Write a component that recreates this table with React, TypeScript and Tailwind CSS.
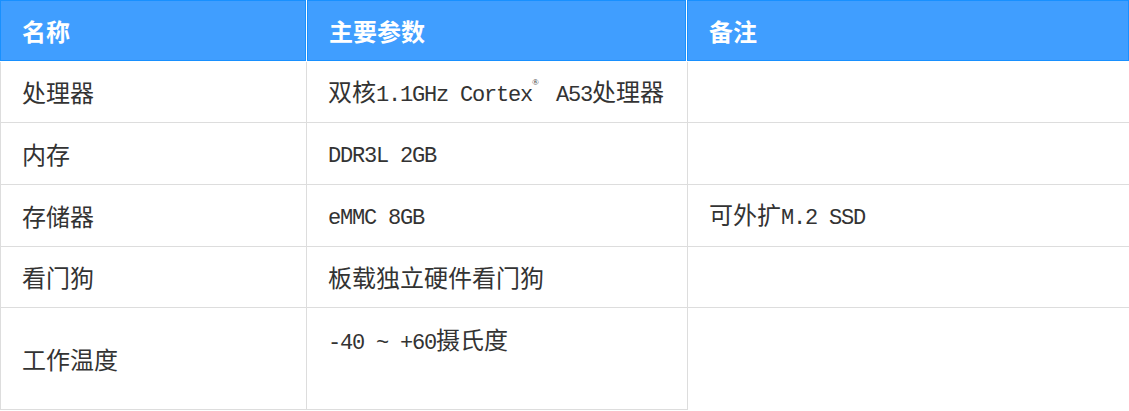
import React from "react";

// Latin runs are half-width (12px) like the CJK font's ASCII glyphs
const L = ({ children }: { children: React.ReactNode }) => (
  <span className="font-['Liberation_Mono',monospace] text-[22px] tracking-[-1.2px]">
    {children}
  </span>
);

const Reg = () => (
  <span className="inline-block w-[12px] align-top text-[9px] leading-[18px] font-['Liberation_Serif',serif]">
    ®
  </span>
);

interface SpecRow {
  name: string;
  spec: React.ReactNode;
  note: React.ReactNode;
  h: string;
}

const rows: SpecRow[] = [
  {
    name: "处理器",
    spec: (
      <>
        双核<L>1.1GHz Cortex</L>
        <Reg />
        <L> A53</L>处理器
      </>
    ),
    note: "",
    h: "h-[61px]",
  },
  { name: "内存", spec: <L>DDR3L 2GB</L>, note: "", h: "h-[62px]" },
  {
    name: "存储器",
    spec: <L>eMMC 8GB</L>,
    note: (
      <>
        可外扩<L>M.2 SSD</L>
      </>
    ),
    h: "h-[62px]",
  },
  { name: "看门狗", spec: "板载独立硬件看门狗", note: "", h: "h-[61px]" },
];

const headers = ["名称", "主要参数", "备注"];

export default function App() {
  return (
    <div className="w-[1129px] h-[411px] overflow-hidden bg-white font-['Noto_Sans_CJK_SC',sans-serif] text-[24px] text-[#333]">
      {/* header */}
      <div className="flex gap-px h-[61px]">
        {headers.map((h, i) => (
          <div
            key={h}
            className={`${
              i === 0 ? "w-[306px]" : i === 1 ? "w-[379px]" : "w-[442px]"
            } flex items-center pl-[21px] border border-[#1890ff] bg-[#409eff] text-white font-bold`}
          >
            {h}
          </div>
        ))}
      </div>

      {/* body */}
      <div className="mt-px">
        {rows.map((r) => (
          <div key={r.name} className={`grid grid-cols-[307px_381px_1fr] ${r.h}`}>
            <div className="flex items-center pl-[21px] border-l border-r border-b border-[#dddddd]">
              {r.name}
            </div>
            <div className="flex items-center pl-[21px] border-r border-b border-[#dddddd] whitespace-pre">
              <span>{r.spec}</span>
            </div>
            <div className="flex items-center pl-[21px] border-b border-[#dddddd] whitespace-pre">
              <span>{r.note}</span>
            </div>
          </div>
        ))}
        <div className="grid grid-cols-[307px_381px_1fr] h-[102px]">
          <div className="flex items-center pl-[21px] border-l border-r border-b border-[#dddddd]">
            工作温度
          </div>
          <div className="flex items-start pt-[13px] pl-[21px] border-r border-b border-[#dddddd] whitespace-pre">
            <span>
              <L>-40 ~ +60</L>摄氏度
            </span>
          </div>
          <div />
        </div>
      </div>
    </div>
  );
}
